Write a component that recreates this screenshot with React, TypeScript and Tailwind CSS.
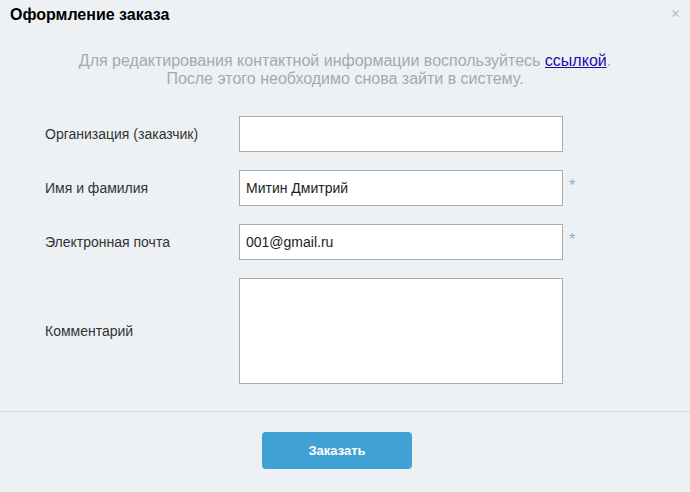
import { X } from "lucide-react";

const font = { fontFamily: '"Liberation Sans", Arial, sans-serif' };

export default function App() {
  return (
    <main
      className="h-[492px] w-[690px] overflow-hidden bg-[#edf1f4] text-[#333]"
      style={font}
    >
      <header className="flex h-[30px] items-center justify-between pl-[10px] pr-[9px]">
        <h1 className="text-[16px] font-bold leading-none text-black">
          Оформление заказа
        </h1>
        <X size={11} strokeWidth={2.2} className="-mt-[4px] text-[#a9adb1]" />
      </header>

      <p className="mt-[22px] text-center text-[16px] leading-[18px] text-[#a6a9ac]">
        Для редактирования контактной информации воспользуйтесь{" "}
        <a href="#" className="text-[#1a0dab] underline">
          ссылкой
        </a>
        .
        <br />
        После этого необходимо снова зайти в систему.
      </p>

      <form className="mt-[28px] grid gap-[18px] pl-[45px]">
        <Row label="Организация (заказчик)" />
        <Row label="Имя и фамилия" value="Митин Дмитрий" required />
        <Row label="Электронная почта" value="001@gmail.ru" required />
        <div className="flex items-center">
          <span className="w-[194px] text-[14px]">Комментарий</span>
          <textarea className="h-[106px] w-[324px] resize-none border border-[#a9abad] bg-white" />
        </div>
      </form>

      <div className="mt-[27px] h-px bg-[#d3d8dc]" />

      <div className="pl-[262px] pt-[20px]">
        <button
          type="button"
          className="h-[37px] w-[150px] rounded-[4px] bg-[#3fa1d4] text-[13px] font-bold text-white"
        >
          Заказать
        </button>
      </div>
    </main>
  );
}

const Row = ({
  label,
  value = "",
  required = false,
}: {
  label: string;
  value?: string;
  required?: boolean;
}) => (
  <div className="flex items-center">
    <span className="w-[194px] text-[14px]">{label}</span>
    <input
      defaultValue={value}
      className="h-[36px] w-[324px] border border-[#a9abad] bg-white px-[6px] text-[14px] text-[#222] outline-none"
    />
    {required && (
      <span className="-mt-[4px] ml-[6px] text-[16px] leading-none text-[#7fb3d8]">
        *
      </span>
    )}
  </div>
);
